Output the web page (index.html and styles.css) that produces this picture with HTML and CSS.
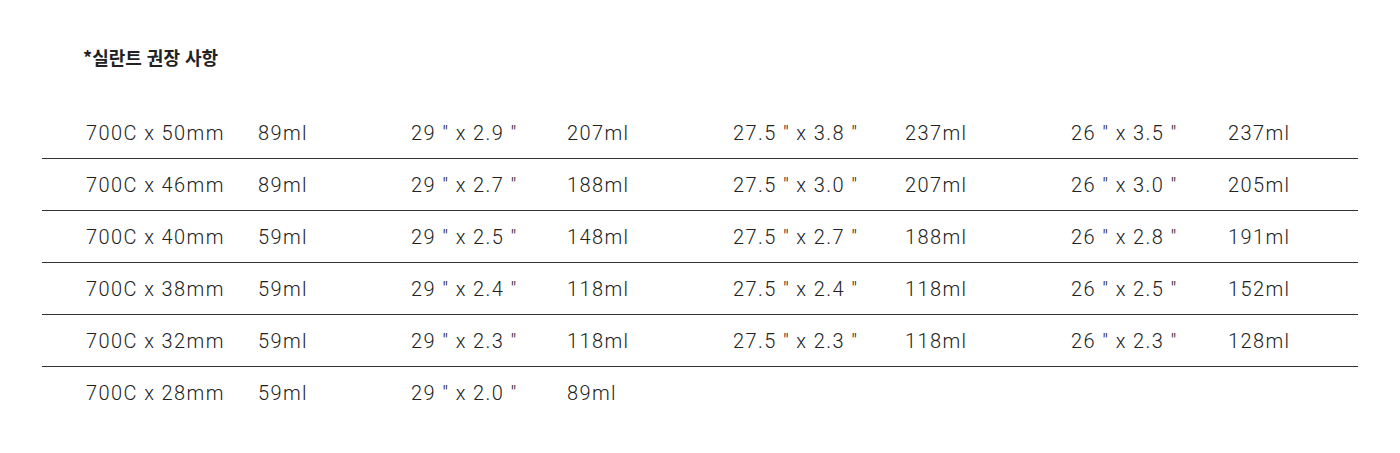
FILE: index.html
```html
<!DOCTYPE html>
<html lang="ko">
<head>
<meta charset="utf-8">
<link rel="stylesheet" href="styles.css">
</head>
<body>
<div class="wrap">
  <h2 class="title">*실란트 권장 사항</h2>
  <div class="table">
    <div class="row"><span>700C x 50mm</span><span>89ml</span><span>29 " x 2.9 "</span><span>207ml</span><span>27.5 " x 3.8 "</span><span>237ml</span><span>26 " x 3.5 "</span><span>237ml</span></div>
    <div class="row"><span>700C x 46mm</span><span>89ml</span><span>29 " x 2.7 "</span><span>188ml</span><span>27.5 " x 3.0 "</span><span>207ml</span><span>26 " x 3.0 "</span><span>205ml</span></div>
    <div class="row"><span>700C x 40mm</span><span>59ml</span><span>29 " x 2.5 "</span><span>148ml</span><span>27.5 " x 2.7 "</span><span>188ml</span><span>26 " x 2.8 "</span><span>191ml</span></div>
    <div class="row"><span>700C x 38mm</span><span>59ml</span><span>29 " x 2.4 "</span><span>118ml</span><span>27.5 " x 2.4 "</span><span>118ml</span><span>26 " x 2.5 "</span><span>152ml</span></div>
    <div class="row"><span>700C x 32mm</span><span>59ml</span><span>29 " x 2.3 "</span><span>118ml</span><span>27.5 " x 2.3 "</span><span>118ml</span><span>26 " x 2.3 "</span><span>128ml</span></div>
    <div class="row last"><span>700C x 28mm</span><span>59ml</span><span>29 " x 2.0 "</span><span>89ml</span><span></span><span></span><span></span><span></span></div>
  </div>
</div>
</body>
</html>
```
FILE: styles.css
```css
html, body {
  margin: 0;
  padding: 0;
  background: #fff;
}
.wrap {
  padding: 45px 42px 0 42px;
}
.title {
  margin: 0 0 0 41px;
  font-family: "Noto Sans CJK KR", "Noto Sans", sans-serif;
  font-weight: 700;
  font-size: 18px;
  line-height: 24px;
  color: #222;
}
.table {
  margin-top: 38px;
}
.row {
  display: grid;
  grid-template-columns: 172px 153px 156px 166px 172px 166px 157px 1fr;
  padding-left: 44px;
  height: 51px;
  align-items: center;
  border-bottom: 1px solid #333;
  font-family: Roboto, "Noto Sans", sans-serif;
  font-weight: 300;
  font-size: 20px;
  letter-spacing: 1.4px;
  color: #222;
  white-space: nowrap;
}
.row.last {
  border-bottom: none;
}
```
